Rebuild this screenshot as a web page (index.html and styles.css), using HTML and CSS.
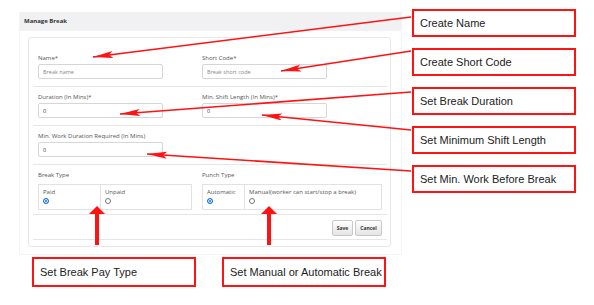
FILE: index.html
```html
<!DOCTYPE html>
<html lang="en">
<head>
  <meta charset="UTF-8">
  <title>Manage Break</title>
  <link rel="stylesheet" href="styles.css">
</head>
<body>
  <div class="page">
    <div class="left">
      <div class="panel">
        <div class="panel-head">Manage Break</div>
        <div class="card">
          <div class="row">
            <div>
              <div class="label">Name*</div>
              <input class="field" type="text" placeholder="Break name">
            </div>
            <div>
              <div class="label">Short Code*</div>
              <input class="field" type="text" placeholder="Break short code">
            </div>
          </div>
          <div class="row">
            <div>
              <div class="label">Duration (In Mins)*</div>
              <input class="field" type="text" value="0">
            </div>
            <div>
              <div class="label">Min. Shift Length (In Mins)*</div>
              <input class="field" type="text" value="0">
            </div>
          </div>
          <div class="row">
            <div>
              <div class="label">Min. Work Duration Required (In Mins)</div>
              <input class="field" type="text" value="0">
            </div>
          </div>
          <div class="row row-choice">
            <div>
              <div class="label label-gap">Break Type</div>
              <div class="choice">
                <div class="opt opt-paid">
                  <div class="label">Paid</div>
                  <span class="radio checked"></span>
                </div>
                <div class="opt opt-last">
                  <div class="label">Unpaid</div>
                  <span class="radio"></span>
                </div>
              </div>
            </div>
            <div>
              <div class="label label-gap">Punch Type</div>
              <div class="choice">
                <div class="opt opt-auto">
                  <div class="label">Automatic</div>
                  <span class="radio checked"></span>
                </div>
                <div class="opt opt-last">
                  <div class="label">Manual(worker can start/stop a break)</div>
                  <span class="radio"></span>
                </div>
              </div>
            </div>
          </div>
          <div class="row row-actions">
            <button class="btn btn-save">Save</button>
            <button class="btn btn-cancel">Cancel</button>
          </div>
        </div>
      </div>
      <div class="notes">
        <div class="note">Set Break Pay Type</div>
        <div class="note">Set Manual or Automatic Break</div>
      </div>
    </div>

    <div class="right">
      <div class="note">Create Name</div>
      <div class="note">Create Short Code</div>
      <div class="note">Set Break Duration</div>
      <div class="note">Set Minimum Shift Length</div>
      <div class="note">Set Min. Work Before Break</div>
    </div>

    <!-- annotation arrows -->
    <svg class="arrows" width="594" height="305" viewBox="0 0 594 305">
      <defs>
        <marker id="head" markerUnits="userSpaceOnUse" markerWidth="22" markerHeight="8" refX="20" refY="3.5" orient="auto">
          <path d="M0,0 L20,3.5 L0,7 L4,3.5 z" fill="#ff1212"/>
        </marker>
      </defs>
      <g stroke="#ff1212" stroke-width="1.6" fill="none">
        <line x1="411" y1="17" x2="93" y2="57" marker-end="url(#head)"/>
        <line x1="411" y1="51" x2="281" y2="71" marker-end="url(#head)"/>
        <line x1="411" y1="92" x2="120" y2="114" marker-end="url(#head)"/>
        <line x1="411" y1="130" x2="262" y2="115" marker-end="url(#head)"/>
        <line x1="411" y1="171" x2="147" y2="154" marker-end="url(#head)"/>
      </g>
      <g fill="#ff1212">
        <rect x="95" y="212" width="4" height="33"/>
        <path d="M97,206 L105,214 L89,214 z"/>
        <rect x="267" y="212" width="4" height="33"/>
        <path d="M269,206 L277,214 L261,214 z"/>
      </g>
    </svg>
  </div>
</body>
</html>
```

FILE: styles.css
```css
body {
  margin: 0;
  background-color: #fff;
  font-family: "Open Sans", "Noto Sans", sans-serif;
  color: #555;
}
.page {
  position: relative;
  display: flex;
  width: 594px;
  height: 305px;
}
.left {
  padding: 12px 0 0 19px;
}
.panel {
  width: 383px;
  height: 243px;
  box-sizing: border-box;
  border: 1px solid #f4f4f4;
  border-top: none;
}
.panel-head {
  height: 19px;
  line-height: 19px;
  padding-left: 4px;
  background-color: #f1f1f3;
  font-size: 6px;
  font-weight: bold;
  color: #333;
}
.card {
  margin: 6px 0 0 8px;
  width: 363px;
  box-sizing: border-box;
  border: 1px solid #e8e8e8;
  border-radius: 3px;
  padding: 10px 3px 6px 4px;
}
.row {
  display: grid;
  grid-template-columns: 154px 180px;
  column-gap: 10px;
  padding: 6px 5px 7px;
  border-bottom: 1px solid #e6e6e6;
}
.label {
  font-size: 6px;
  line-height: 8px;
  color: #555;
  margin-bottom: 2px;
  white-space: nowrap;
}
.label-gap {
  margin-bottom: 5px;
}
.field {
  display: block;
  width: 125px;
  height: 15px;
  box-sizing: border-box;
  margin: 0;
  padding: 0 4px;
  border: 1px solid #d6d6d6;
  border-radius: 2px;
  font-family: "Open Sans", sans-serif;
  font-size: 5.5px;
  color: #333;
  outline: none;
}
.field::placeholder {
  color: #888;
}
.row-choice {
  padding-bottom: 4px;
}
.choice {
  display: flex;
  height: 26px;
  box-sizing: border-box;
  border: 1px solid #e2e2e2;
}
.opt {
  padding: 3px 4px;
  border-right: 1px solid #e2e2e2;
}
.opt-paid {
  width: 62px;
  box-sizing: border-box;
}
.opt-auto {
  width: 42px;
  box-sizing: border-box;
}
.opt-last {
  border-right: none;
}
.radio {
  display: block;
  width: 6px;
  height: 6px;
  box-sizing: border-box;
  border: 1px solid #777;
  border-radius: 50%;
  background-color: #fff;
}
.radio.checked {
  border-color: #1a73e8;
  background-color: #1a73e8;
  box-shadow: inset 0 0 0 1px #fff;
}
.row-actions {
  display: flex;
  justify-content: flex-end;
  gap: 2px;
  padding: 5px 5px 3px;
}
.btn {
  height: 16px;
  margin: 0;
  padding: 0;
  border: 1px solid #c8c8c8;
  border-radius: 2px;
  background: linear-gradient(#fff, #e4e4e4);
  font-family: "Open Sans", sans-serif;
  font-size: 5px;
  font-weight: bold;
  color: #333;
}
.btn-save {
  width: 21px;
}
.btn-cancel {
  width: 27px;
}
.notes {
  display: flex;
  gap: 26px;
  margin: 2px 0 0 13px;
}
.notes .note {
  height: 30px;
}
.right {
  display: flex;
  flex-direction: column;
  gap: 11px;
  margin-left: 10px;
  padding-top: 9px;
}
.note {
  display: flex;
  align-items: center;
  width: 164px;
  height: 28px;
  box-sizing: border-box;
  border: 2px solid #ff1212;
  padding-left: 6px;
  font-family: "Liberation Sans", Arial, sans-serif;
  font-size: 11px;
  color: #222;
}
.arrows {
  position: absolute;
  top: 0;
  left: 0;
  pointer-events: none;
}
```
